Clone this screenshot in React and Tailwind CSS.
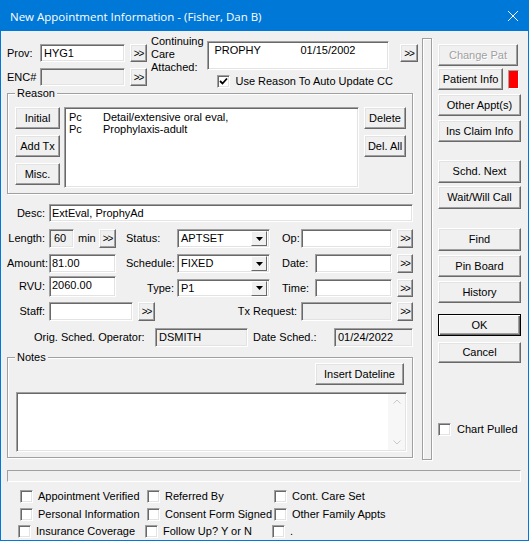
import React from 'react';

const Btn = ({ children, className = '', disabled, isDefault }) => (
  <div
    className={`flex items-center justify-center shrink-0 bg-[#f0f0f0] whitespace-nowrap ${
      isDefault
        ? 'border border-black shadow-[inset_1px_1px_0_#fff,inset_-1px_-1px_0_#696969,inset_-2px_-2px_0_#a0a0a0]'
        : 'border border-t-white border-l-white border-r-[#696969] border-b-[#696969] shadow-[inset_-1px_-1px_0_#a0a0a0,inset_1px_1px_0_#e3e3e3]'
    } ${disabled ? 'text-[#a0a0a0] [text-shadow:1px_1px_0_#fff]' : 'text-black'} ${className}`}
  >
    {children}
  </div>
);

const More = ({ className = '' }) => (
  <Btn className={`text-[10px] tracking-[-1px] ${className}`}>&gt;&gt;</Btn>
);

const Field = ({ children, className = '', gray }) => (
  <div
    className={`shrink-0 border border-t-[#a0a0a0] border-l-[#a0a0a0] border-r-white border-b-white shadow-[inset_1px_1px_0_#696969,inset_-1px_-1px_0_#e3e3e3] whitespace-nowrap overflow-hidden ${
      gray ? 'bg-[#f0f0f0]' : 'bg-white'
    } ${className}`}
  >
    {children}
  </div>
);

const Check = ({ checked }) => (
  <Field className="w-[13px] h-[13px] flex items-center justify-center">
    {checked && (
      <svg width="9" height="9" viewBox="0 0 9 9">
        <path d="M1 4 L3.5 6.5 L8 1.5" stroke="#000" strokeWidth="1.8" fill="none" />
      </svg>
    )}
  </Field>
);

const Combo = ({ value, className = '' }) => (
  <Field className={`w-[93px] flex items-center pl-[3px] pr-[2px] ${className}`}>
    <span className="flex-1">{value}</span>
    <div className="w-[16px] h-[15px] flex items-center justify-center border border-t-white border-l-white border-r-[#696969] border-b-[#696969] bg-[#f0f0f0]">
      <svg width="7" height="4" viewBox="0 0 7 4">
        <path d="M0 0 H7 L3.5 4 Z" fill="#000" />
      </svg>
    </div>
  </Field>
);

const Group = ({ title, className = '', children }) => (
  <div className={`relative border border-[#a0a0a0] shadow-[inset_1px_1px_0_#fff,1px_1px_0_#fff] ${className}`}>
    <span className="absolute -top-[7px] left-[7px] px-[2px] bg-[#f0f0f0]">{title}</span>
    {children}
  </div>
);

const Label = ({ children, className = '' }) => (
  <span className={`shrink-0 whitespace-nowrap ${className}`}>{children}</span>
);

const Opt = ({ label, checked }) => (
  <div className="flex items-center gap-[5px] shrink-0 w-[127px]">
    <Check checked={checked} />
    <span className="whitespace-nowrap">{label}</span>
  </div>
);

export default function App() {
  return (
    <div className="w-[529px] h-[541px] flex flex-col border border-[#0078d7] bg-[#f0f0f0] text-[11px] leading-[13px] text-black font-['Liberation_Sans',Arial,sans-serif] overflow-hidden">
      {/* barre de titre */}
      <div className="h-[30px] shrink-0 bg-[#0078d7] flex items-center pl-[9px] pr-[10px] text-white text-[11.5px] font-['Open_Sans',sans-serif]">
        <span>New Appointment Information - (Fisher, Dan B)</span>
        <svg className="ml-auto" width="10" height="10" viewBox="0 0 10 10">
          <path d="M0 0 L10 10 M10 0 L0 10" stroke="#fff" strokeWidth="1" />
        </svg>
      </div>

      <div className="flex pl-[6px] h-[429px] shrink-0">
        {/* colonne gauche */}
        <div className="w-[411px] flex flex-col shrink-0">
          <div className="mt-[4px] h-[54px] flex items-start">
            <div className="w-[140px] pt-[9px] flex flex-col gap-[6px]">
              <div className="flex items-center h-[18px]">
                <Label className="w-[33px]">Prov:</Label>
                <Field className="w-[85px] h-[18px] pl-[3px] leading-[16px]">HYG1</Field>
                <More className="ml-[5px] w-[17px] h-[18px]" />
              </div>
              <div className="flex items-center h-[18px]">
                <Label className="w-[33px]">ENC#</Label>
                <Field gray className="w-[85px] h-[18px]" />
                <More className="ml-[5px] w-[17px] h-[18px]" />
              </div>
            </div>
            <div className="ml-[4px] w-[56px] leading-[13px]">
              Continuing
              <br />
              Care
              <br />
              Attached:
            </div>
            <div className="ml-[3px] mt-[6px] flex flex-col">
              <Field className="w-[182px] h-[29px] flex pl-[6px] pt-[2px]">
                <span className="w-[86px]">PROPHY</span>
                <span>01/15/2002</span>
              </Field>
              <div className="mt-[5px] pl-[10px] flex items-center gap-[5px]">
                <Check checked />
                <span className="whitespace-nowrap">Use Reason To Auto Update CC</span>
              </div>
            </div>
            <More className="ml-[7px] mt-[9px] w-[18px] h-[18px]" />
          </div>

          <Group title="Reason" className="mt-[4px] w-[406px] h-[101px] flex pt-[13px] pl-[7px]">
            <div className="flex flex-col gap-[6px] w-[45px]">
              <Btn className="h-[22px]">Initial</Btn>
              <Btn className="h-[22px]">Add Tx</Btn>
              <Btn className="h-[22px]">Misc.</Btn>
            </div>
            <Field className="ml-[4px] w-[295px] h-[81px] pl-[4px] pt-[3px] leading-[12px]">
              {[
                ['Pc', 'Detail/extensive oral eval,'],
                ['Pc', 'Prophylaxis-adult'],
              ].map(([c, d], i) => (
                <div key={i} className="flex">
                  <span className="w-[34px]">{c}</span>
                  <span>{d}</span>
                </div>
              ))}
            </Field>
            <div className="ml-[5px] flex flex-col gap-[6px] w-[42px]">
              <Btn className="h-[22px]">Delete</Btn>
              <Btn className="h-[22px]">Del. All</Btn>
            </div>
          </Group>

          <div className="mt-[10px] h-[18px] flex items-center">
            <Label className="w-[42px] text-right pr-[4px]">Desc:</Label>
            <Field className="w-[364px] h-[18px] pl-[2px] leading-[16px]">ExtEval, ProphyAd</Field>
          </div>

          <div className="mt-[7px] h-[19px] flex items-center">
            <Label className="w-[42px] text-right pr-[4px]">Length:</Label>
            <Field gray className="w-[25px] h-[19px] pl-[4px] leading-[17px]">60</Field>
            <Label className="ml-[4px] w-[21px]">min</Label>
            <More className="w-[17px] h-[19px]" />
            <Label className="w-[61px] pl-[10px]">Status:</Label>
            <Combo value="APTSET" className="h-[19px]" />
            <Label className="w-[31px] pl-[12px]">Op:</Label>
            <Field className="w-[91px] h-[19px]" />
            <More className="ml-[5px] w-[16px] h-[19px]" />
          </div>

          <div className="mt-[6px] h-[19px] flex items-center">
            <Label className="w-[42px] text-right pr-[4px]">Amount:</Label>
            <Field className="w-[67px] h-[19px] pl-[2px] leading-[17px]">81.00</Field>
            <Label className="w-[61px] pl-[10px]">Schedule:</Label>
            <Combo value="FIXED" className="h-[19px]" />
            <Label className="w-[45px] pl-[12px]">Date:</Label>
            <Field className="w-[77px] h-[19px]" />
            <More className="ml-[5px] w-[16px] h-[19px]" />
          </div>

          <div className="mt-[3px] h-[21px] flex items-end">
            <Label className="w-[42px] text-right pr-[4px] self-center">RVU:</Label>
            <Field className="w-[67px] h-[21px] pl-[2px] pt-[2px]">2060.00</Field>
            <Label className="w-[61px] h-[18px] flex items-center justify-end pr-[3px]">Type:</Label>
            <Combo value="P1" className="h-[18px]" />
            <Label className="w-[45px] h-[18px] flex items-center pl-[12px]">Time:</Label>
            <Field className="w-[77px] h-[18px]" />
            <More className="ml-[5px] w-[16px] h-[18px]" />
          </div>

          <div className="mt-[5px] h-[19px] flex items-center">
            <Label className="w-[42px] text-right pr-[4px]">Staff:</Label>
            <Field className="w-[84px] h-[19px]" />
            <More className="ml-[5px] w-[17px] h-[19px]" />
            <Label className="w-[146px] text-right pr-[4px]">Tx Request:</Label>
            <Field gray className="w-[91px] h-[19px]" />
            <More className="ml-[5px] w-[16px] h-[19px]" />
          </div>

          <div className="mt-[7px] h-[19px] flex items-center">
            <Label className="w-[148px] pl-[27px]">Orig. Sched. Operator:</Label>
            <Field gray className="w-[93px] h-[19px] pl-[3px] leading-[17px]">DSMITH</Field>
            <Label className="w-[86px] pl-[5px]">Date Sched.:</Label>
            <Field gray className="w-[79px] h-[19px] pl-[3px] leading-[17px]">01/24/2022</Field>
          </div>

          <Group title="Notes" className="mt-[10px] w-[406px] h-[101px] flex flex-col pt-[5px]">
            <Btn className="self-end mr-[8px] w-[89px] h-[22px]">Insert Dateline</Btn>
            <Field className="mt-[7px] ml-[8px] w-[391px] h-[60px] flex justify-end">
              <div className="w-[17px] my-[1px] mr-[1px] bg-[#f7f7f7] flex flex-col items-center justify-between py-[5px] text-[#c8c8c8]">
                <svg width="8" height="5" viewBox="0 0 8 5">
                  <path d="M0.5 4.5 L4 1 L7.5 4.5" stroke="currentColor" fill="none" />
                </svg>
                <svg width="8" height="5" viewBox="0 0 8 5">
                  <path d="M0.5 0.5 L4 4 L7.5 0.5" stroke="currentColor" fill="none" />
                </svg>
              </div>
            </Field>
          </Group>
        </div>

        {/* séparateur */}
        <div className="ml-[4px] mt-[7px] w-[10px] h-[422px] shrink-0 border border-[#a0a0a0] shadow-[inset_1px_1px_0_#fff,1px_1px_0_#fff]" />

        {/* boutons de droite */}
        <div className="ml-[6px] w-[83px] flex flex-col pt-[13px] shrink-0">
          <Btn disabled className="w-[80px] h-[22px]">Change Pat</Btn>
          <div className="mt-[2px] flex items-start">
            <Btn className="w-[65px] h-[22px]">Patient Info</Btn>
            <div className="ml-[5px] mt-[2px] w-[11px] h-[19px] bg-[#ff0000] border border-t-[#a0a0a0] border-l-[#a0a0a0] border-r-white border-b-white" />
          </div>
          <Btn className="mt-[4px] w-[83px] h-[22px]">Other Appt(s)</Btn>
          <Btn className="mt-[4px] w-[83px] h-[22px]">Ins Claim Info</Btn>
          <Btn className="mt-[18px] w-[83px] h-[23px]">Schd. Next</Btn>
          <Btn className="mt-[3px] w-[83px] h-[23px]">Wait/Will Call</Btn>
          <Btn className="mt-[19px] w-[83px] h-[23px]">Find</Btn>
          <Btn className="mt-[4px] w-[83px] h-[22px]">Pin Board</Btn>
          <Btn className="mt-[4px] w-[83px] h-[22px]">History</Btn>
          <Btn isDefault className="mt-[11px] w-[83px] h-[22px]">OK</Btn>
          <Btn className="mt-[6px] w-[83px] h-[21px]">Cancel</Btn>
          <div className="mt-[60px] flex items-center gap-[6px]">
            <Check />
            <span className="whitespace-nowrap">Chart Pulled</span>
          </div>
        </div>
      </div>

      {/* barre d'état */}
      <div className="mt-[10px] ml-[6px] w-[514px] h-[12px] shrink-0 border border-t-[#a0a0a0] border-l-[#a0a0a0] border-r-white border-b-white" />

      <div className="mt-[8px] pl-[19px] flex h-[13px]">
        <Opt label="Appointment Verified" />
        <Opt label="Referred By" />
        <Opt label="Cont. Care Set" />
      </div>
      <div className="mt-[5px] pl-[19px] flex h-[13px]">
        <Opt label="Personal Information" />
        <Opt label="Consent Form Signed" />
        <Opt label="Other Family Appts" />
      </div>
      <div className="mt-[4px] pl-[17px] flex h-[13px]">
        <Opt label="Insurance Coverage" />
        <Opt label="Follow Up? Y or N" />
        <Opt label="." />
      </div>
    </div>
  );
}
